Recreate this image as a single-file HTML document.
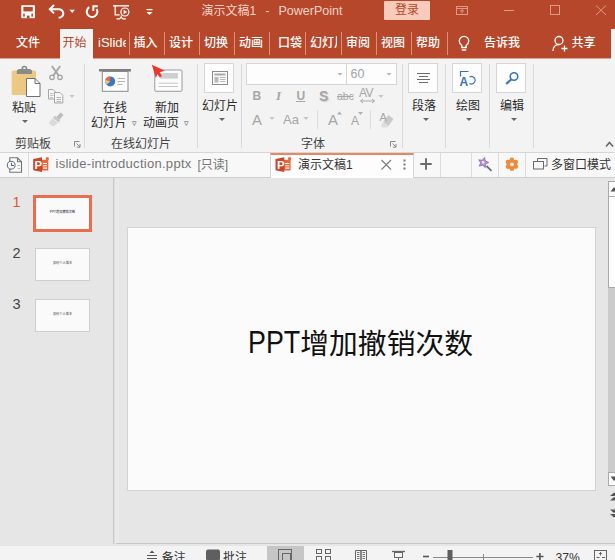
<!DOCTYPE html>
<html lang="zh-CN">
<head>
<meta charset="utf-8">
<title>演示文稿1 - PowerPoint</title>
<style>
*{box-sizing:border-box;margin:0;padding:0}
html,body{width:615px;height:560px;overflow:hidden;background:#e6e6e6;}
body{position:relative;font-family:"Liberation Sans","Noto Sans CJK SC",sans-serif;font-size:12px;color:#333;}
.abs{position:absolute}
#title{left:0;top:0;width:615px;height:58px;background:#b7472a;}
.tt{position:absolute;color:#f3d3c8;font-size:13px;line-height:16px;white-space:nowrap}
.tab{position:absolute;top:29px;height:29px;line-height:28px;color:#fff;font-size:12px;text-align:left;white-space:nowrap;overflow:hidden;font-weight:500}
.sep{position:absolute;top:32px;width:1px;height:23px;background:#dc9079}
#ribbon{left:0;top:58px;width:615px;height:95px;background:#f3f3f3;border-bottom:1px solid #d6d6d6}
.lbl{position:absolute;font-size:12px;line-height:14px;color:#2b2b2b;white-space:nowrap;text-align:center}
.glbl{position:absolute;font-size:12px;line-height:14px;color:#444;white-space:nowrap;text-align:center;top:79px}
.vsep{position:absolute;top:6px;width:1px;height:84px;background:#d9d9d9}
.btnbox{position:absolute;background:#fdfdfd;border:1px solid #d6d6d6;z-index:0}
#ribbon svg{z-index:1}
#ribbon .lbl,#ribbon .glbl,#ribbon .arr{z-index:2}
.arr{position:absolute;width:0;height:0;border-left:3px solid transparent;border-right:3px solid transparent;border-top:3px solid #666}
.gray{color:#a6a6a6}
#doctabs{left:0;top:153px;width:615px;height:25px;background:#f8f8f8;border-bottom:1px solid #cdcdcd}
#main{left:0;top:178px;width:615px;height:368px;background:#e6e6e6}
#status{left:0;top:546px;width:615px;height:14px;background:#f3f3f3;overflow:hidden}
</style>
</head>
<body>
<!-- TITLE BAR + TABS -->
<div id="title" class="abs">
  <svg class="abs" style="left:0;top:0" width="615" height="29" viewBox="0 0 615 29" fill="none" stroke="#fff" stroke-width="1.6">
    <!-- save -->
    <rect x="21.300" y="5.200" width="13.600" height="13" fill="#fff" stroke="none"/>
    <g fill="#b7472a" stroke="none">
      <rect x="23.400" y="6.900" width="9.400" height="4.500"/>
      <rect x="23.200" y="13.600" width="1.600" height="3"/>
      <rect x="31.400" y="13.600" width="1.600" height="3"/>
      <rect x="26.800" y="15.600" width="2.700" height="2.700"/>
    </g>
    <!-- undo -->
    <path d="M50.500 9.200h8.300a4.300 4.300 0 0 1 3.300 7.200q-1.200 1.200 -3.500 1.300" stroke-width="2"/>
    <path d="M54 5l-4.200 4.200l4.200 4.200" stroke-width="2"/>
    <path d="M69.500 9.800h5.400l-2.700 3.200z" fill="#fff" stroke="none"/>
    <!-- repeat -->
    <path d="M89.300 7.200a5.300 5.300 0 1 0 7.300 1.800" stroke-width="2"/>
    <path d="M93.300 11v-4.800h4.500" stroke-width="1.900"/>
    <!-- present -->
    <path d="M113 5.800h16" stroke-width="1.400"/>
    <path d="M115.200 5.800v9h4.500" stroke-width="1.300"/>
    <circle cx="124.900" cy="12" r="4" stroke-width="1.200"/>
    <path d="M123.600 9.800v4.400l3.500-2.200z" fill="#fff" stroke="none"/>
    <path d="M121.200 15.500v2M116.500 18.800h3l1.700-1.500l1.700 1.500h3" stroke-width="1.200"/>
    <!-- customize -->
    <path d="M146.500 9.600h6" stroke-width="1.300"/>
    <path d="M146.500 12h6l-3 3z" fill="#fff" stroke="none"/>
  </svg>
  <div class="tt" style="left:201.500px;top:3px;font-size:12px">演示文稿1</div>
  <div class="tt" style="left:265.500px;top:3px;font-size:12px">-</div>
  <div class="tt" style="left:278.500px;top:3px;font-size:12.500px">PowerPoint</div>
  <div class="abs" style="left:384px;top:1px;width:46px;height:19px;background:#f8cbbb;border-radius:1px;color:#b7472a;font-size:12px;line-height:19px;text-align:center">登录</div>
  <svg class="abs" style="left:450px;top:0" width="165" height="29" viewBox="0 0 165 29" fill="none" stroke="#dd9a85" stroke-width="1">
    <rect x="6.500" y="6.500" width="11" height="8"/>
    <path d="M6.500 8.500h11M12 13.500v-3.500M10 11.500l2-1.800l2 1.800"/>
    <path d="M54 10.500h10"/>
    <rect x="100.500" y="5.500" width="9" height="9"/>
    <path d="M146 5.500l10 9.500M156 5.500l-10 9.500"/>
  </svg>
  <!-- tabs -->
  <div class="abs" style="left:60px;top:29px;width:33px;height:29px;background:#f3f3f3"></div>
  <div class="tab" style="left:16px;">文件</div>
  <div class="tab" style="left:62.500px;color:#b7472a;font-weight:400">开始</div>
  <div class="tab" style="left:98px;width:27.500px;font-size:13px">iSlide</div>
  <div class="tab" style="left:133.500px;">插入</div>
  <div class="tab" style="left:169px;">设计</div>
  <div class="tab" style="left:204px;">切换</div>
  <div class="tab" style="left:239px;">动画</div>
  <div class="tab" style="left:278px;">口袋</div>
  <div class="tab" style="left:310px;width:27px">幻灯片</div>
  <div class="tab" style="left:346px;">审阅</div>
  <div class="tab" style="left:381px;">视图</div>
  <div class="tab" style="left:416px;">帮助</div>
  <div class="sep" style="left:129px"></div>
  <div class="sep" style="left:164px"></div>
  <div class="sep" style="left:199px"></div>
  <div class="sep" style="left:234px"></div>
  <div class="sep" style="left:269px"></div>
  <div class="sep" style="left:305px"></div>
  <div class="sep" style="left:341px"></div>
  <div class="sep" style="left:376px"></div>
  <div class="sep" style="left:411px"></div>
  <div class="sep" style="left:446.500px"></div>
  <svg class="abs" style="left:455px;top:32px" width="20" height="24" viewBox="0 0 20 24" fill="none" stroke="#fff" stroke-width="1.3">
    <path d="M6.800 13.500c-1.500-1.300-2.500-2.700-2.500-4.500a4.700 4.700 0 0 1 9.400 0c0 1.800-1 3.200-2.500 4.500v2h-4.400zM6.800 18h4.400"/>
  </svg>
  <div class="tab" style="left:484px;">告诉我</div>
  <svg class="abs" style="left:549px;top:32.500px" width="22" height="22" viewBox="0 0 22 22" fill="none" stroke="#fff" stroke-width="1.3">
    <circle cx="10" cy="7.500" r="4"/>
    <path d="M4 18c0-4 2.500-6.500 6-6.500"/>
    <path d="M15.500 12.500v6M12.500 15.500h6"/>
  </svg>
  <div class="tab" style="left:571.500px;">共享</div>
  <div class="abs" style="left:611px;top:29px;width:4px;height:29px;background:#f3f3f3"></div>
</div>

<div class="abs" style="left:0;top:58px;width:60px;height:1px;background:#d8a595;z-index:5"></div>
<div class="abs" style="left:93px;top:58px;width:518px;height:1px;background:#d8a595;z-index:5"></div>
<!-- RIBBON -->
<div id="ribbon" class="abs">
  <!-- clipboard group (coordinates relative to ribbon top y=58) -->
  <svg class="abs" style="left:0;top:0" width="615" height="94" viewBox="0 58 615 94" fill="none">
    <!-- paste icon -->
    <rect x="11.700" y="70.500" width="24.300" height="24.500" rx="1.500" fill="#ecc983"/>
    <path d="M16.800 74v-3.500l2-1.500h11.200l2 1.500v3.500z" fill="#8a8a8a"/>
    <circle cx="24.400" cy="68.600" r="2.100" fill="none" stroke="#8a8a8a" stroke-width="1.700"/>
    <path d="M26.500 78.500h8.500l5 5v13h-13.500z" fill="#fff" stroke="#6f6f6f" stroke-width="1"/>
    <path d="M35 78.500v5h5" stroke="#6f6f6f" stroke-width="1"/>
    <!-- scissors -->
    <g stroke="#a4a4a4" stroke-width="1.300">
      <path d="M51.800 66l6.800 9.500M60.200 66l-6.800 9.500" stroke-width="1.900"/>
      <circle cx="52" cy="77.300" r="2.200"/>
      <circle cx="60" cy="77.300" r="2.200"/>
    </g>
    <!-- copy -->
    <g stroke="#a6a6a6" stroke-width="1" fill="#f6f6f6">
      <path d="M48.500 89.500h4.500l2.500 2.500v7h-7z"/>
      <path d="M50 93.500h3.500M50 95.500h3.500M50 97.500h3" stroke-width=".8" stroke="#b5b5b5"/>
      <path d="M54.500 92.500h5.500l2.800 2.800v7.700h-8.300z"/>
      <path d="M56.500 97.500h4.500M56.500 99.500h4.500M56.500 101.500h4.500" stroke-width=".8"/>
    </g>
    <path d="M69.500 95h5l-2.500 3z" fill="#c4c4c4"/>
    <!-- format painter -->
    <g>
      <path d="M60.500 112.500l3 2.500l-4.500 5l-3-2.500z" fill="#bdbdbd"/>
      <path d="M55 115.500l5.500 4.500l-2 2.500l-5.500-4.500z" fill="#c9c9c9"/>
      <path d="M52.500 118.500l5.500 4.500l-5 3.500l-4.500-3.500z" fill="#dadada"/>
    </g>
    <!-- dialog launcher -->
    <g stroke="#8a8a8a" stroke-width="1">
      <path d="M79.500 141.500h-5v5"/>
      <path d="M76.500 143.500l3.500 3.500M80 144v3.200h-3.200"/>
    </g>
    <!-- online slide icon -->
    <rect x="99" y="69" width="32" height="2.500" fill="#7f7f7f"/>
    <rect x="102.300" y="71.500" width="25.700" height="19.800" fill="#fdfdfd" stroke="#8a8a8a" stroke-width="1"/>
    <circle cx="110.200" cy="81.400" r="5" fill="#3c78c2"/>
    <path d="M110.200 81.400v-5a5 5 0 0 0 -4.700 3.300z" fill="#e8683f"/>
    <path d="M110.200 81.400l-4.700-1.700a5 5 0 0 0 .9 5z" fill="#efc27a"/>
    <path d="M117.500 78.500h7.500M117.500 81.500h7.500M117.500 84.500h5" stroke="#b5b5b5" stroke-width="1"/>
    <!-- new animation page icon -->
    <rect x="154.800" y="70" width="27.200" height="21.300" rx="1" fill="#fcfcfc" stroke="#9a9a9a" stroke-width="1"/>
    <rect x="160" y="73" width="18" height="5.600" fill="#cfcfcf"/>
    <path d="M158.500 83.200h19.500M158.500 86.500h19.500" stroke="#c4c4c4" stroke-width="1"/>
    <path d="M151.800 64.800l12.700 5.700l-4.800 2l2.300 3.600l-2.300 1.400l-2.200-3.600l-1.600 4.100z" fill="#e8392d"/>
    <!-- slide button icon -->
    <rect x="212.500" y="71.500" width="15" height="13" fill="#fafafa" stroke="#8c8c8c" stroke-width="1"/>
    <rect x="214.500" y="73.500" width="11" height="2" fill="#a9a9a9"/>
    <rect x="214.500" y="77" width="4" height="5.500" fill="#b9b9b9"/>
    <path d="M220 77.500h5.500M220 79.500h5.500M220 81.500h5.500" stroke="#b9b9b9" stroke-width="1"/>
    <!-- paragraph icon -->
    <path d="M417 73.500h13M419 76.500h9M417 79.500h13M419 82.500h9" stroke="#6e6e6e" stroke-width="1"/>
    <!-- drawing icon -->
    <g stroke="#3b73b9" stroke-width="1.200">
      <path d="M460.500 76.500v-5h8"/>
      <path d="M469.500 77a3.800 3.800 0 1 1 0 6.600" fill="none"/>
    </g>
    <!-- magnifier -->
    <g stroke="#3b73b9" stroke-width="1.600">
      <circle cx="514" cy="76.500" r="3.800"/>
      <path d="M511.200 79.500l-5 4.500" stroke-width="2.200"/>
    </g>
    <!-- font group icons -->
    <path d="M337.500 73h5l-2.500 2.500z" fill="#b2b2b2"/>
    <path d="M386.500 73h5l-2.500 2.500z" fill="#b2b2b2"/>
    <path d="M296 101.500h9.500" stroke="#a9a9a9" stroke-width="1"/>
    <path d="M337 96.500h16.500" stroke="#a9a9a9" stroke-width="1"/>
    <path d="M360.500 101h14M360.500 101l2.500-2M360.500 101l2.500 2M374.500 101l-2.500-2M374.500 101l-2.500 2" stroke="#a9a9a9" stroke-width="1"/>
    <path d="M378.500 95h5l-2.500 3z" fill="#c4c4c4"/>
    <path d="M269.500 117h5l-2.500 3z" fill="#c4c4c4"/>
    <path d="M303.500 117h5l-2.500 3z" fill="#c4c4c4"/>
    <path d="M317.500 110v19M370.500 110v19" stroke="#dcdcdc" stroke-width="1"/>
    <path d="M337 114.500h5l-2.500-3z" fill="#b0b0b0"/>
    <path d="M358 112h5l-2.500 3z" fill="#b0b0b0"/>
    <path d="M388.500 115l5 4l-5 7l-5.500-4z" fill="#c9c9c9"/>
    <path d="M383 122l5.500 4l-1.500 1.500h-4.500l-1.500-2z" fill="#dedede"/>
    <g stroke="#8a8a8a" stroke-width="1">
      <path d="M395.500 141.500h-5v5"/>
      <path d="M392.500 143.500l3.500 3.500M396 144v3.200h-3.200"/>
    </g>
    <!-- collapse chevron -->
    <path d="M606 146.500l3.500-4l3.500 4" stroke="#666" stroke-width="1.600"/>
  </svg>
  <div class="lbl" style="left:4px;top:43px;width:40px;">粘贴</div>
  <div class="arr" style="left:22px;top:62px"></div>
  <div class="glbl" style="left:8px;width:50px;">剪贴板</div>
  <div class="vsep" style="left:84px"></div>
  <div class="lbl" style="left:95px;top:43px;width:40px;">在线</div>
  <div class="lbl" style="left:90px;top:57.500px;width:38px;">幻灯片</div>
  <div class="lbl" style="left:129px;top:57.500px;width:10px;font-size:9px;color:#555">▿</div>
  <div class="lbl" style="left:147px;top:43px;width:40px;">新加</div>
  <div class="lbl" style="left:142px;top:57.500px;width:38px;">动画页</div>
  <div class="lbl" style="left:181px;top:57.500px;width:10px;font-size:9px;color:#555">▿</div>
  <div class="glbl" style="left:101px;width:80px;">在线幻灯片</div>
  <div class="vsep" style="left:197px"></div>
  <div class="btnbox" style="left:204px;top:5px;width:30px;height:30px"></div>
  <div class="lbl" style="left:200px;top:41px;width:40px;">幻灯片</div>
  <div class="arr" style="left:219px;top:60px"></div>
  <div class="vsep" style="left:241px"></div>
  <!-- font group -->
  <div class="btnbox" style="left:246px;top:5px;width:101px;height:22px"></div>
  <div class="btnbox" style="left:347px;top:5px;width:50px;height:22px;border-left:none"></div>
  <div class="lbl gray" style="left:350.500px;top:9px;font-size:12.500px;color:#a2a2a2">60</div>
  <div class="lbl gray" style="left:252.500px;top:31px;font-weight:bold;font-size:12px">B</div>
  <div class="lbl gray" style="left:276px;top:31px;font-style:italic;font-size:13px;font-family:'Liberation Serif',serif;font-weight:bold">I</div>
  <div class="lbl gray" style="left:296.500px;top:31px;font-size:12px;font-weight:bold">U</div>
  <div class="lbl gray" style="left:319px;top:31px;font-weight:bold;font-size:14px;text-shadow:1px 1px 1px #ccc">S</div>
  <div class="lbl gray" style="left:337px;top:31px;font-size:10.500px">abc</div>
  <div class="lbl gray" style="left:359px;top:28px;font-size:12px;letter-spacing:-.5px">AV</div>
  <div class="lbl gray" style="left:252px;top:53px;font-size:15px;line-height:18px">A</div>
  <div class="lbl gray" style="left:283px;top:54px;font-size:13px;line-height:16px">Aa</div>
  <div class="lbl gray" style="left:328px;top:54px;font-size:15px;line-height:16px">A</div>
  <div class="lbl gray" style="left:351px;top:56px;font-size:12px;line-height:14px">A</div>
  <div class="lbl gray" style="left:379.500px;top:52px;font-size:11px;line-height:14px">A</div>
  <div class="glbl" style="left:293px;width:40px;">字体</div>
  <div class="vsep" style="left:402px"></div>
  <div class="btnbox" style="left:408px;top:5px;width:30px;height:30px"></div>
  <div class="lbl" style="left:404px;top:41px;width:40px;">段落</div>
  <div class="arr" style="left:423px;top:60px"></div>
  <div class="vsep" style="left:445px"></div>
  <div class="btnbox" style="left:452px;top:5px;width:30px;height:30px"></div>
  <div class="lbl" style="left:448px;top:41px;width:40px;">绘图</div>
  <div class="arr" style="left:466px;top:60px"></div>
  <div class="lbl" style="left:459.500px;top:17.500px;font-size:12px;font-weight:bold;color:#3b73b9;line-height:12px">A</div>
  <div class="vsep" style="left:489px"></div>
  <div class="btnbox" style="left:496px;top:5px;width:30px;height:30px"></div>
  <div class="lbl" style="left:492px;top:41px;width:40px;">编辑</div>
  <div class="arr" style="left:511px;top:60px"></div>
  <div class="vsep" style="left:533px"></div>
</div>

<!-- DOC TABS -->
<div id="doctabs" class="abs">
  <div class="abs" style="left:270px;top:0px;width:144px;height:25px;background:#fdfdfd;border-top:2px solid #e88862;border-right:1px solid #d4d4d4;border-left:1px solid #d4d4d4"></div>
  <svg class="abs" style="left:0;top:-1px" width="615" height="26" viewBox="0 152 615 26" fill="none">
    <!-- history doc icon -->
    <path d="M9.800 157.800h7.700l4 4v10.500h-11.700z" fill="#fafafa" stroke="#737373" stroke-width="1.100"/>
    <path d="M17.500 157.800v4h4" stroke="#737373" stroke-width="1.100"/>
    <path d="M17.500 165.500h2.500M17.500 168.500h2.500" stroke="#bdbdbd" stroke-width="1"/>
    <circle cx="11.200" cy="165.200" r="3.900" fill="#fdfdfd" stroke="#737373" stroke-width="1.100"/>
    <path d="M11.500 162.800v2.700h2.500" stroke="#4a6fd0" stroke-width="1.100"/>
    <path d="M28.500 153v24" stroke="#dcdcdc" stroke-width="1"/>
    <!-- ppt icon 1 -->
    <g>
      <rect x="41.500" y="159.800" width="6.800" height="10.700" fill="#e8673f"/>
      <path d="M33.200 159l8.800-1.700v14.700l-8.800-1.700z" fill="#cf4424"/>
      <circle cx="47.300" cy="158.700" r="1.700" fill="#ea6a3f"/>
      <path d="M43 163.500h4M43 165.800h4M43 168.100h4" stroke="#fff" stroke-width="1.100"/>
      <text x="34.600" y="169" font-family="Liberation Sans, sans-serif" font-size="11.500" font-weight="bold" fill="#fff">P</text>
    </g>
    <!-- ppt icon 2 -->
    <g transform="translate(242.300 0)">
      <rect x="41.500" y="159.800" width="6.800" height="10.700" fill="#e8673f"/>
      <path d="M33.200 159l8.800-1.700v14.700l-8.800-1.700z" fill="#cf4424"/>
      <circle cx="47.300" cy="158.700" r="1.700" fill="#ea6a3f"/>
      <path d="M43 163.500h4M43 165.800h4M43 168.100h4" stroke="#fff" stroke-width="1.100"/>
      <text x="34.600" y="169" font-family="Liberation Sans, sans-serif" font-size="11.500" font-weight="bold" fill="#fff">P</text>
    </g>
    <!-- close x -->
    <path d="M381.500 160l9.500 9.500M391 160l-9.500 9.500" stroke="#7a7a7a" stroke-width="1.100"/>
    <!-- dots -->
    <rect x="403.500" y="159.500" width="2" height="2" fill="#777"/>
    <rect x="403.500" y="163.500" width="2" height="2" fill="#777"/>
    <rect x="403.500" y="167.500" width="2" height="2" fill="#777"/>
    <!-- plus -->
    <path d="M420.300 164h11.400M426 158.300v11.400" stroke="#6a6a6a" stroke-width="1.900"/>
    <path d="M440.500 153v24M471.500 153v24M498.500 153v24M525.500 153v24" stroke="#dcdcdc" stroke-width="1"/>
    <!-- wand -->
    <path d="M486.500 166l5 4.800" stroke="#6f6f6f" stroke-width="1.800"/>
    <path d="M484.6 157.5L485.3 161.0L488.7 162.4L485.5 164.1L485.3 167.7L482.7 165.2L479.1 166.1L480.7 162.9L478.7 159.8L482.3 160.3z" fill="#b590d8" stroke="#8a68b3" stroke-width=".8"/>
    <circle cx="483.100" cy="162.300" r="1.400" fill="#efe4fa"/>
    <!-- gear -->
    <g fill="#ee8a3a">
      <circle cx="511.9" cy="164.3" r="4.900"/>
      <circle cx="511.9" cy="159.8" r="2.300"/>
      <circle cx="515.8" cy="162.1" r="2.300"/>
      <circle cx="515.8" cy="166.6" r="2.300"/>
      <circle cx="511.9" cy="168.8" r="2.300"/>
      <circle cx="508.0" cy="166.6" r="2.300"/>
      <circle cx="508.0" cy="162.1" r="2.300"/>
    </g>
    <circle cx="511.9" cy="164.3" r="1.900" fill="#f7f2ec"/>
    <!-- windows -->
    <path d="M537.500 161v-2.500h9.500v7.500h-2.500" stroke="#6a6a6a" stroke-width="1"/>
    <rect x="533.500" y="161.500" width="10" height="7.500" stroke="#6a6a6a" stroke-width="1" fill="#f7f7f7"/>
  </svg>
  <div class="abs" style="left:55.500px;top:3px;font-size:13px;line-height:16px;color:#757575;white-space:nowrap;letter-spacing:.280px">islide-introduction.pptx</div>
  <div class="abs" style="left:197.500px;top:4px;font-size:12px;line-height:16px;color:#757575;white-space:nowrap">[只读]</div>
  <div class="abs" style="left:298px;top:4px;font-size:12px;line-height:16px;color:#333;white-space:nowrap">演示文稿1</div>
  <div class="abs" style="left:551px;top:4px;font-size:12px;line-height:16px;color:#333;white-space:nowrap">多窗口模式</div>
</div>

<!-- MAIN -->
<div id="main" class="abs">
  <!-- left panel -->
  <div class="abs" style="left:113px;top:0;width:1px;height:366px;background:#c8c8c8"></div>
  <div class="abs" style="left:116px;top:365px;width:499px;height:1px;background:#c6c6c6;z-index:3"></div>
  <div class="abs" style="left:114px;top:0;width:1px;height:366px;background:#dedede"></div>
  <div class="abs" style="left:115px;top:1px;width:4px;height:364px;background:#e9e9e9"></div>
  <div class="abs" style="left:12.500px;top:15.500px;font-size:14.500px;line-height:16px;color:#d9583a">1</div>
  <div class="abs" style="left:12.500px;top:67px;font-size:14.500px;line-height:16px;color:#444">2</div>
  <div class="abs" style="left:12.500px;top:118px;font-size:14.500px;line-height:16px;color:#444">3</div>
  <div class="abs" style="left:33px;top:17px;width:59px;height:37px;border:3px solid #e96e4d;background:#fafafa"></div>
  <div class="abs" style="left:35px;top:70px;width:55px;height:33px;border:1px solid #cfcfcf;background:#fafafa"></div>
  <div class="abs" style="left:35px;top:121px;width:55px;height:33px;border:1px solid #cfcfcf;background:#fafafa"></div>
  <div class="abs" style="left:33px;top:30.500px;width:59px;text-align:center;font-size:4px;line-height:6px;color:#222;white-space:nowrap;transform:scale(.8)">PPT增加撤销次数</div>
  <div class="abs" style="left:35px;top:82px;width:55px;text-align:center;font-size:4px;line-height:6px;color:#444;white-space:nowrap;transform:scale(.8)">如何个人版本</div>
  <div class="abs" style="left:35px;top:133px;width:55px;text-align:center;font-size:4px;line-height:6px;color:#444;white-space:nowrap;transform:scale(.8)">如何个人版本</div>
  <!-- slide -->
  <div class="abs" style="left:127px;top:49px;width:469px;height:264px;background:#fbfbfb;border:1px solid #d2d2d2"></div>
  <div class="abs" style="left:126px;top:145px;width:469px;text-align:center;font-size:28.800px;line-height:40px;color:#111;white-space:nowrap"><span style="display:inline-block;font-size:30.500px;line-height:40px;transform:scaleX(.88);transform-origin:0 50%;margin-right:-7px;position:relative;top:-1px;vertical-align:baseline">PPT</span>增加撤销次数</div>
  <!-- scrollbar -->
  <div class="abs" style="left:608px;top:3px;width:8px;height:305px;background:#cbcbcb;"></div>
  <div class="abs" style="left:608px;top:3px;width:8px;height:16px;background:#fdfdfd;border:1px solid #a9a9a9"></div>
  <div class="abs" style="left:608px;top:18px;width:8px;height:92px;background:#fdfdfd;border:1px solid #a9a9a9"></div>
  <div class="abs" style="left:608px;top:294px;width:8px;height:14px;background:#fdfdfd;border:1px solid #a9a9a9"></div>
  <svg class="abs" style="left:600px;top:0" width="15" height="369" viewBox="600 178 15 369" fill="#555">
    <path d="M610.500 191.500l3.500-4.500l3.500 4.500z"/>
    <path d="M610.500 476.500l3.500 4.500l3.500-4.500z"/>
    <path d="M610 496l4-3.500l4 3.500zM610 500.500l4-3.500l4 3.500z"/>
    <path d="M610 509.500l4 3.500l4-3.500zM610 514l4 3.500l4-3.500z"/>
  </svg>
</div>

<!-- STATUS -->
<div id="status" class="abs">
  <svg class="abs" style="left:0;top:0" width="615" height="14" viewBox="0 546 615 14" fill="none">
    <rect x="267" y="546" width="37" height="14" fill="#c6c6c6"/>
    <!-- notes icon -->
    <path d="M147 555.500h10M147 558.500h10" stroke="#555" stroke-width="1.200"/>
    <path d="M149.500 553l2.500-2.500l2.500 2.500z" fill="#555"/>
    <!-- comment -->
    <rect x="206" y="549.500" width="14" height="11" rx="2" fill="#5f5f5f"/>
    <!-- normal view -->
    <rect x="278.500" y="549.500" width="13" height="11" stroke="#666" stroke-width="1"/>
    <rect x="282.500" y="553.500" width="8" height="8" stroke="#666" stroke-width="1"/>
    <!-- sorter -->
    <rect x="316.500" y="549.500" width="5" height="4" stroke="#666" stroke-width="1"/>
    <rect x="325.500" y="549.500" width="5" height="4" stroke="#666" stroke-width="1"/>
    <rect x="316.500" y="556.500" width="5" height="4" stroke="#666" stroke-width="1"/>
    <rect x="325.500" y="556.500" width="5" height="4" stroke="#666" stroke-width="1"/>
    <!-- reading -->
    <path d="M355.500 561v-10.500h5.500v10.500M361 561v-10.500h5.500v10.500" stroke="#666" stroke-width="1"/>
    <path d="M357 552.500h2.500M357 554.500h2.500M357 556.500h2.500M357 558.500h2.500M362.500 552.500h2.500M362.500 554.500h2.500M362.500 556.500h2.500M362.500 558.500h2.500" stroke="#777" stroke-width="1"/>
    <!-- slideshow -->
    <path d="M392 551.500h13" stroke="#666" stroke-width="1.300"/>
    <rect x="394.500" y="552.500" width="8" height="5" stroke="#666" stroke-width="1"/>
    <path d="M398.500 557.500v3" stroke="#666" stroke-width="1"/>
    <!-- zoom -->
    <path d="M423 556.500h6" stroke="#555" stroke-width="1.600"/>
    <path d="M433 557.500h100" stroke="#8a8a8a" stroke-width="1"/>
    <path d="M483.500 554v6" stroke="#8a8a8a" stroke-width="1"/>
    <rect x="447.500" y="550" width="5" height="11" fill="#5f5f5f"/>
    <path d="M536.300 556.500h7.200M539.900 553v7" stroke="#555" stroke-width="1.600"/>
    <!-- fit -->
    <rect x="594.500" y="550.500" width="12" height="11" stroke="#666" stroke-width="1"/>
    <path d="M600.500 552v3.500M596.500 557.500h3M602 557.500h3M599 553.500h3" stroke="#666" stroke-width="1"/>
  </svg>
  <div class="abs" style="left:161.700px;top:5px;font-size:12px;line-height:14px;color:#333;white-space:nowrap">备注</div>
  <div class="abs" style="left:223px;top:5px;font-size:12px;line-height:14px;color:#333;white-space:nowrap">批注</div>
  <div class="abs" style="left:555.500px;top:5px;font-size:12.200px;line-height:14px;color:#333;white-space:nowrap">37%</div>
</div>
</body>
</html>
